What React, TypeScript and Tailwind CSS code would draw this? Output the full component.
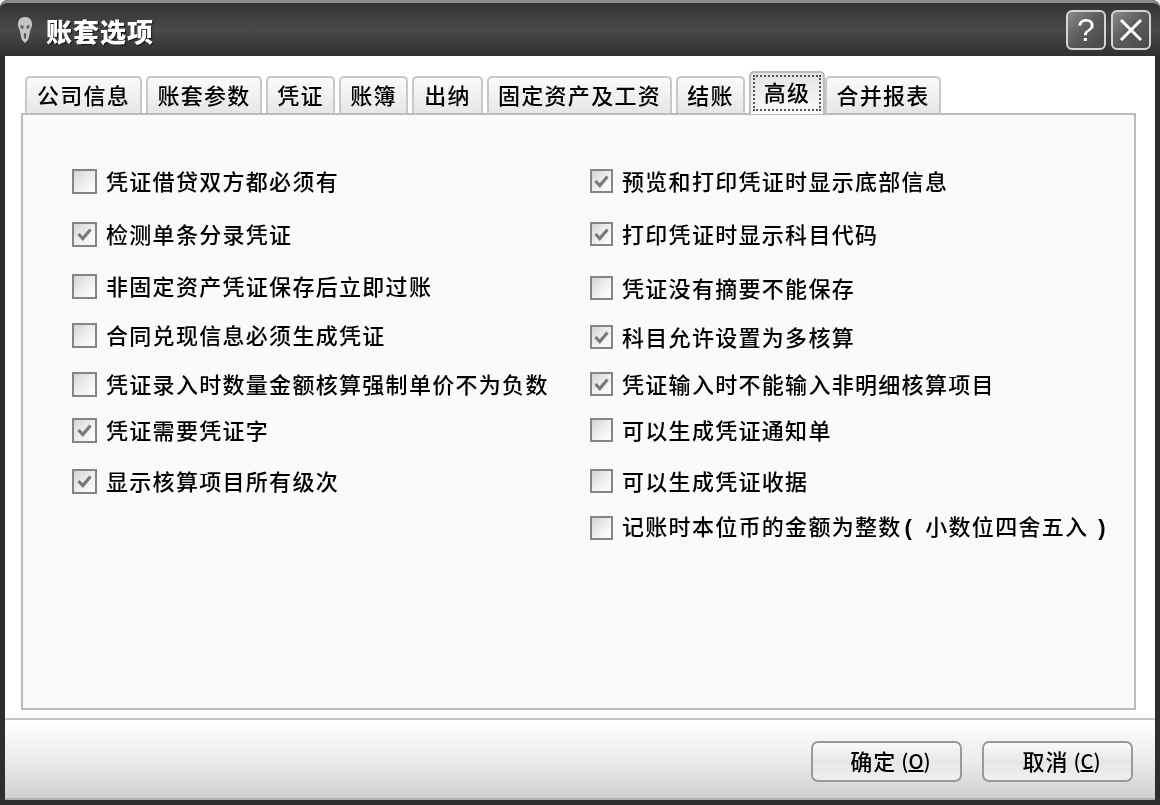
import React from "react";

const font = { fontFamily: '"Noto Sans CJK SC", "Liberation Sans", sans-serif' };

function Check({ label, checked, mt, right }: { label: React.ReactNode; checked?: boolean; mt: string; right?: boolean }) {
  return (
    <div className={`flex items-center h-[26px] ${mt}`}>
      <div className={`${right ? "w-[23px] h-[24px]" : "w-[25px] h-[25px]"} shrink-0 border-2 border-[#858585] bg-gradient-to-br from-[#d4d4d4] via-[#eeeeee] to-[#ffffff] flex items-center justify-center`}>
        {checked && (
          <svg width="17" height="17" viewBox="0 0 17 17">
            <path d="M2.5 8 L6.8 12.5 L14.5 3.5" fill="none" stroke="#7a7a7a" strokeWidth="3.2" />
          </svg>
        )}
      </div>
      <span className="ml-[9px] pb-[3px] text-[22px] leading-[26px] tracking-[1.3px] font-medium text-black whitespace-nowrap">{label}</span>
    </div>
  );
}

function Tab({ label, w, active }: { label: string; w: string; active?: boolean }) {
  if (active) {
    return (
      <div className={`${w} h-[43px] -mb-[1px] relative z-10 rounded-t-[5px] border-2 border-b-0 border-[#bdbdbd] bg-gradient-to-b from-[#e4e4e4] to-[#fafafa] flex justify-center px-[2px] pt-[2px]`}>
        <div className="w-full h-[36px] pb-[3px] border-2 border-dotted border-[#555] flex items-center justify-center text-[22px] tracking-[1.3px] font-medium text-black whitespace-nowrap">{label}</div>
      </div>
    );
  }
  return (
    <div className={`${w} h-[37px] pb-[3px] rounded-t-[5px] border-2 border-b-0 border-[#c8c8c8] bg-gradient-to-b from-[#fbfbfb] to-[#e6e6e6] flex items-center justify-center text-[22px] tracking-[1.3px] font-medium text-black whitespace-nowrap`}>{label}</div>
  );
}

function CapBtn({ children }: { children: React.ReactNode }) {
  return (
    <div className="w-[40px] h-[40px] rounded-[6px] border-2 border-[#d4d4d4] bg-gradient-to-br from-[#8a8a8a] via-[#5a5a5a] to-[#4a4a4a] flex items-center justify-center text-white">
      {children}
    </div>
  );
}

function Btn({ label, mn }: { label: string; mn: string }) {
  return (
    <div className="w-[151px] h-[41px] pl-[8px] pb-[2px] rounded-[7px] border-2 border-[#999999] bg-gradient-to-b from-[#fafafa] via-[#e6e6e6] to-[#f0f0f0] flex items-center justify-center text-[22px] tracking-[1px] font-medium text-black whitespace-nowrap">
      {label}
      <span className="ml-[5px] text-[20px] tracking-normal">(<span className="underline">{mn}</span>)</span>
    </div>
  );
}

export default function App() {
  return (
    <div className="w-[1160px] h-[805px] bg-[#f4f4f4] overflow-hidden" style={font}>
      <div className="w-full h-full rounded-t-[8px] bg-[#2e2e2e] flex flex-col blur-[0.5px]">
        {/* title bar */}
        <div className="h-[56px] shrink-0 rounded-t-[8px] border-t-[3px] border-[#8c8c8c] bg-gradient-to-b from-[#333333] via-[#4a4a4a] to-[#303030] flex items-center pl-[15px] pr-[9px]">
          <svg width="20" height="28" viewBox="0 0 18 26" className="shrink-0">
            <path d="M9 1 C14 1 16 5 15.5 9 L14 13 L12 22 L9 25 L6 22 L4 13 L2.5 9 C2 5 4 1 9 1 Z" fill="#c4c4c4" />
            <path d="M5 8 L8 10 L7 12 L5 11 Z M13 8 L10 10 L11 12 L13 11 Z M8 16 H10 V21 H8 Z" fill="#555" />
          </svg>
          <span className="ml-[11px] pt-[2px] text-[26px] leading-[30px] font-black tracking-[1px] text-white [text-shadow:1px_1px_1px_#111]">账套选项</span>
          <div className="ml-auto flex gap-[5px]">
            <CapBtn><span className="text-[32px] leading-none font-['Liberation_Sans']">?</span></CapBtn>
            <CapBtn>
              <svg width="28" height="28" viewBox="0 0 28 28"><path d="M4 4 L24 24 M24 4 L4 24" stroke="#fff" strokeWidth="3" /></svg>
            </CapBtn>
          </div>
        </div>
        {/* client */}
        <div className="flex-1 min-h-0 flex flex-col mx-[5px] mb-[5px] bg-white">
          <div className="flex-1 min-h-0 flex flex-col px-[16px] pt-[16px]">
            <div className="flex items-end h-[41px] pl-[4px] gap-[4px]">
              <Tab label="公司信息" w="w-[117px]" />
              <Tab label="账套参数" w="w-[116px]" />
              <Tab label="凭证" w="w-[69px]" />
              <Tab label="账簿" w="w-[69px]" />
              <Tab label="出纳" w="w-[71px]" />
              <Tab label="固定资产及工资" w="w-[185px]" />
              <Tab label="结账" w="w-[69px]" />
              <Tab label="高级" w="w-[76px]" active />
              <Tab label="合并报表" w="w-[116px] -ml-[4px]" />
            </div>
            <div className="h-[597px] w-[1115px] border-2 border-[#bcbcbc] bg-[#fafafa] flex pl-[49px] pt-[53px]">
              <div className="w-[518px]">
                <Check mt="" label="凭证借贷双方都必须有" />
                <Check mt="mt-[27px]" checked label="检测单条分录凭证" />
                <Check mt="mt-[26px]" label="非固定资产凭证保存后立即过账" />
                <Check mt="mt-[23px]" label="合同兑现信息必须生成凭证" />
                <Check mt="mt-[23px]" label="凭证录入时数量金额核算强制单价不为负数" />
                <Check mt="mt-[20px]" checked label="凭证需要凭证字" />
                <Check mt="mt-[25px]" checked label="显示核算项目所有级次" />
              </div>
              <div>
                <Check right mt="" checked label="预览和打印凭证时显示底部信息" />
                <Check right mt="mt-[27px]" checked label="打印凭证时显示科目代码" />
                <Check right mt="mt-[28px]" label="凭证没有摘要不能保存" />
                <Check right mt="mt-[23px]" checked label="科目允许设置为多核算" />
                <Check right mt="mt-[21px]" checked label="凭证输入时不能输入非明细核算项目" />
                <Check right mt="mt-[20px]" label="可以生成凭证通知单" />
                <Check right mt="mt-[25px]" label="可以生成凭证收据" />
                <Check
                  right
                  mt="mt-[21px]"
                  label={
                    <>
                      记账时本位币的金额为整数
                      <span className="font-black ml-[3px] mr-[12px] font-['Liberation_Sans']">(</span>
                      小数位四舍五入
                      <span className="font-black ml-[10px] font-['Liberation_Sans']">)</span>
                    </>
                  }
                />
              </div>
            </div>
          </div>
          <div className="h-[2px] mt-[8px] bg-[#c4c4c4] shrink-0" />
          <div className="h-[80px] shrink-0 bg-gradient-to-b from-[#ffffff] via-[#ececec] to-[#d0d0d0] border-b-2 border-[#b0b0b0] flex justify-end items-start gap-[20px] pr-[22px] pt-[21px]">
            <Btn label="确定" mn="O" />
            <Btn label="取消" mn="C" />
          </div>
        </div>
      </div>
    </div>
  );
}
